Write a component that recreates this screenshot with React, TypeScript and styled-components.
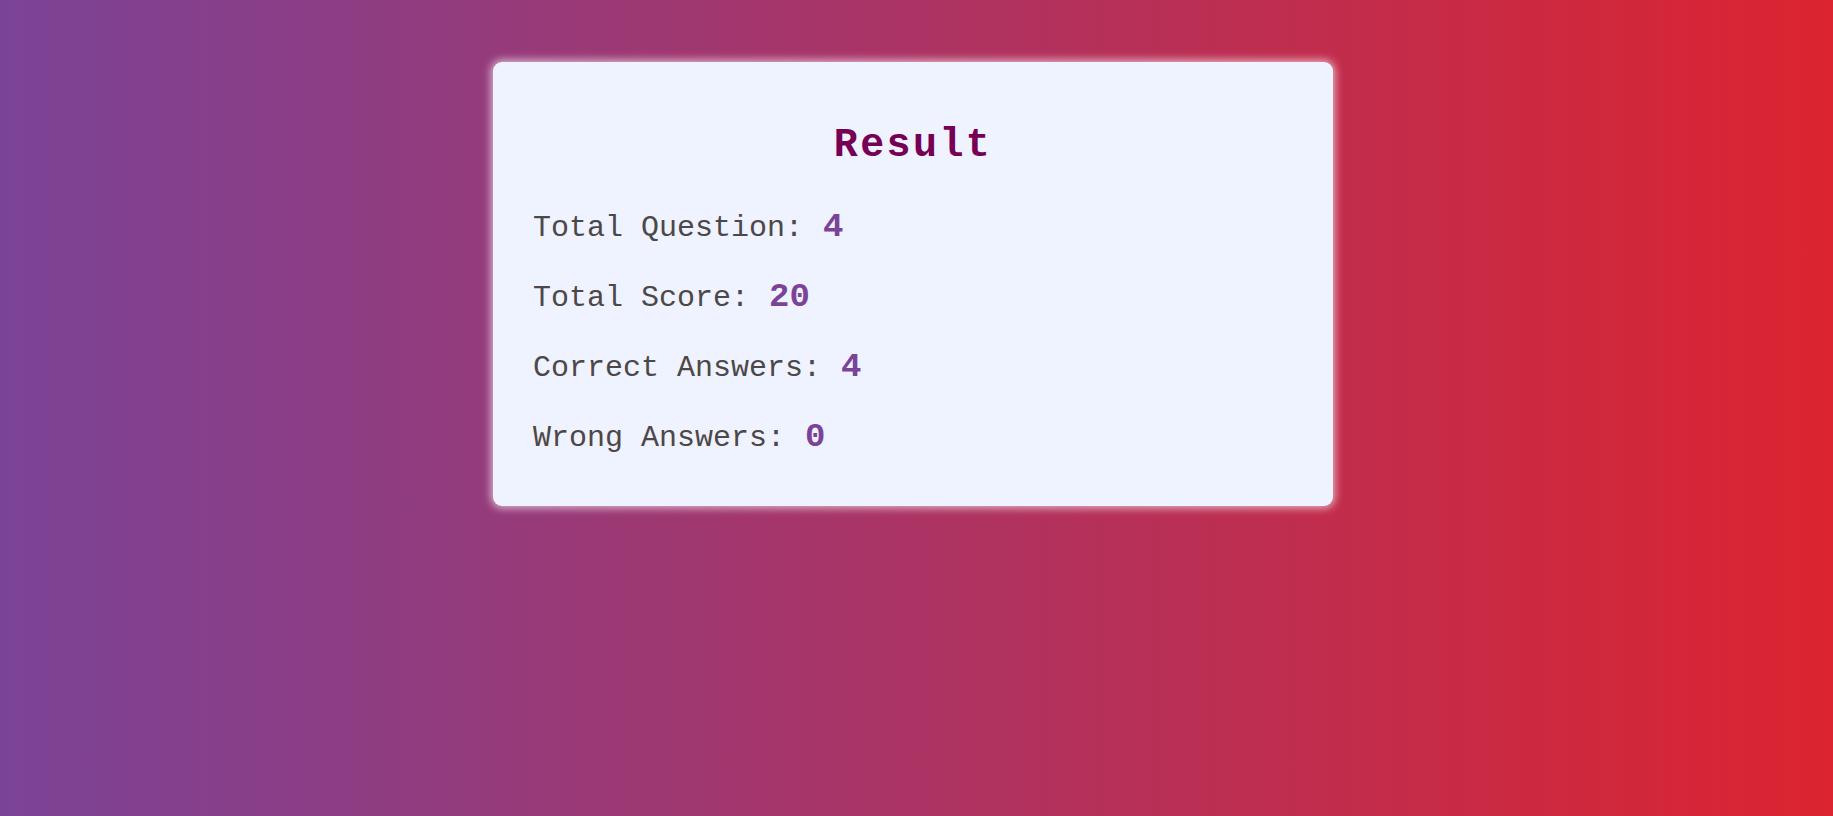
import React from 'react';
import styled, { createGlobalStyle } from 'styled-components';

const GlobalStyle = createGlobalStyle`
  * {
    box-sizing: border-box;
  }

  body {
    margin: 0;
    font-family: "Liberation Mono", "DejaVu Sans Mono", monospace;
  }
`;

const Page = styled.div`
  min-height: 100vh;
  background: linear-gradient(to right, #7b4397, #dc2430);
  display: flex;
  justify-content: center;
  align-items: flex-start;
  padding: 62px 7px 0 0;
`;

const ResultCard = styled.div`
  width: 840px;
  background-color: #eff2ff;
  border-radius: 9px;
  box-shadow: 0 0 8px 2px rgba(255, 255, 255, 0.65);
  padding: 40px 40px 48px;
`;

const Title = styled.h1`
  margin: 20px 0 38px;
  font-size: 40px;
  line-height: 48px;
  font-weight: 700;
  text-align: center;
  letter-spacing: 2.4px;
  color: #760054;
`;

const StatList = styled.div`
  display: flex;
  flex-direction: column;
  gap: 30px;
`;

const StatRow = styled.p`
  margin: 0;
  font-size: 30px;
  line-height: 40px;
  color: #4c4848;
`;

const StatValue = styled.span`
  font-size: 34px;
  line-height: 1;
  font-weight: 700;
  color: #7b4397;
  margin-left: 2px;
`;

const stats = [
  { label: 'Total Question:', value: 4 },
  { label: 'Total Score:', value: 20 },
  { label: 'Correct Answers:', value: 4 },
  { label: 'Wrong Answers:', value: 0 },
];

export default function App() {
  return (
    <>
      <GlobalStyle />
      <Page>
        <ResultCard>
          <Title>Result</Title>
          <StatList>
            {stats.map((s) => (
              <StatRow key={s.label}>
                {s.label} <StatValue>{s.value}</StatValue>
              </StatRow>
            ))}
          </StatList>
        </ResultCard>
      </Page>
    </>
  );
}
